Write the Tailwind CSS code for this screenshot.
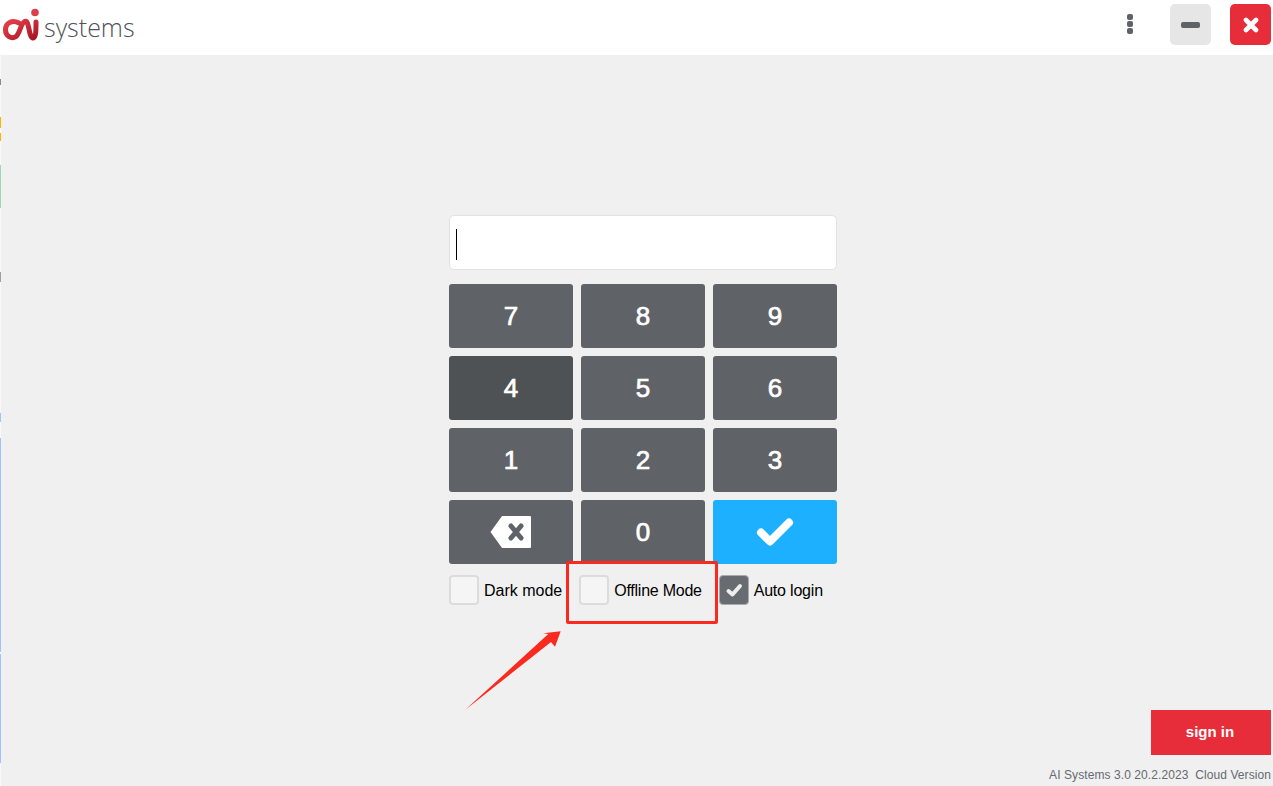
<!DOCTYPE html>
<html lang="en">

<head>
    <meta charset="UTF-8">
    <meta name="viewport" content="width=device-width, initial-scale=1.0">
    <title>AI Systems - Login</title>
    <script src="https://cdn.jsdelivr.net/npm/@tailwindcss/browser@4"></script>
</head>

<body class="relative w-[1273px] h-[786px] overflow-hidden bg-[#f0f0f0] font-['Liberation_Sans',Arial,sans-serif]">
    <!-- header -->
    <header class="h-[55px] bg-white flex items-start">
        <div class="flex items-center h-full">
            <svg width="44" height="55" viewBox="0 0 44 55" class="shrink-0">
                <defs>
                    <linearGradient id="logoRed" x1="0" y1="0" x2="1" y2="1">
                        <stop offset="0" stop-color="#e8414a" />
                        <stop offset="1" stop-color="#a81525" />
                    </linearGradient>
                </defs>
                <path d="M19 23 C12 19.500 5.500 23 5.500 29.800 C5.500 36 11.500 39.500 16 36.500 C20 33.500 20.500 24 24.500 21.500 C27 20 28 24 29 29 C30 35 31.500 38.500 33.500 37.800 C35.800 37 36 31 36 22" fill="none" stroke="url(#logoRed)" stroke-width="5" stroke-linecap="round" />
                <circle cx="35" cy="12.500" r="3.800" fill="#d9404a" />
            </svg>
            <span class="font-['Open_Sans',sans-serif] font-light text-[25px] text-[#4f5257] leading-none -mt-[1px]">systems</span>
        </div>
        <div class="ml-auto flex items-start pt-[4px]">
            <div class="flex flex-col gap-[1px] mt-[10px] mr-[37px]">
                <span class="w-[6px] h-[6px] rounded-[2px] bg-[#5f6266]"></span>
                <span class="w-[6px] h-[6px] rounded-[2px] bg-[#5f6266]"></span>
                <span class="w-[6px] h-[6px] rounded-[2px] bg-[#5f6266]"></span>
            </div>
            <button class="w-[41px] h-[41px] rounded-[5px] bg-[#e6e6e6] flex items-center justify-center mr-[19px]">
                <span class="w-[19px] h-[6px] rounded-[2px] bg-[#5f6266]"></span>
            </button>
            <button class="w-[41px] h-[41px] rounded-[5px] bg-[#e62d39] flex items-center justify-center mr-[2px]">
                <svg width="16" height="16" viewBox="0 0 16 16">
                    <path d="M3 3 L13 13 M13 3 L3 13" stroke="#fff" stroke-width="4.600" stroke-linecap="round" />
                </svg>
            </button>
        </div>
    </header>

    <!-- main -->
    <main class="h-[731px] flex flex-col pt-[160px]">
        <div class="w-[388px] ml-[449px]">
            <div class="h-[55px] bg-white border border-[#e2e2e2] rounded-[5px] flex items-center pl-[6px]">
                <span class="w-[1px] h-[31px] mt-[4px] bg-black"></span>
            </div>

            <div class="grid grid-cols-3 gap-[8px] mt-[14px]">
                <button class="h-[64px] rounded-[3px] bg-[#5f6266] text-white text-[26px] [-webkit-text-stroke:0.7px_#fff]">7</button>
                <button class="h-[64px] rounded-[3px] bg-[#5f6266] text-white text-[26px] [-webkit-text-stroke:0.7px_#fff]">8</button>
                <button class="h-[64px] rounded-[3px] bg-[#5f6266] text-white text-[26px] [-webkit-text-stroke:0.7px_#fff]">9</button>
                <button class="h-[64px] rounded-[3px] bg-[#4f5254] text-white text-[26px] [-webkit-text-stroke:0.7px_#fff]">4</button>
                <button class="h-[64px] rounded-[3px] bg-[#5f6266] text-white text-[26px] [-webkit-text-stroke:0.7px_#fff]">5</button>
                <button class="h-[64px] rounded-[3px] bg-[#5f6266] text-white text-[26px] [-webkit-text-stroke:0.7px_#fff]">6</button>
                <button class="h-[64px] rounded-[3px] bg-[#5f6266] text-white text-[26px] [-webkit-text-stroke:0.7px_#fff]">1</button>
                <button class="h-[64px] rounded-[3px] bg-[#5f6266] text-white text-[26px] [-webkit-text-stroke:0.7px_#fff]">2</button>
                <button class="h-[64px] rounded-[3px] bg-[#5f6266] text-white text-[26px] [-webkit-text-stroke:0.7px_#fff]">3</button>
                <button class="h-[64px] rounded-[3px] bg-[#5f6266] flex items-center justify-center">
                    <svg width="42" height="32" viewBox="0 0 42 32">
                        <path d="M12 0 H40 Q41 0 41 1 V31 Q41 32 40 32 H12 L0.500 16 Z" fill="#fff" />
                        <path d="M21 10 L31 22 M31 10 L21 22" stroke="#5f6266" stroke-width="5" stroke-linecap="round" />
                    </svg>
                </button>
                <button class="h-[64px] rounded-[3px] bg-[#5f6266] text-white text-[26px] [-webkit-text-stroke:0.7px_#fff]">0</button>
                <button class="h-[64px] rounded-[3px] bg-[#1cb0ff] flex items-center justify-center">
                    <svg width="38" height="30" viewBox="0 0 38 30">
                        <path d="M5 15.500 L14 24.500 L33 5.500" fill="none" stroke="#fff" stroke-width="8" stroke-linecap="round" stroke-linejoin="round" />
                    </svg>
                </button>
            </div>

            <div class="flex items-center mt-[11px] text-[16px] text-black">
                <span class="w-[30px] h-[30px] rounded-[4px] bg-[#f5f5f5] border-2 border-[#dcdcdc]"></span>
                <span class="ml-[5px] pt-[2px]">Dark mode</span>
                <span class="w-[30px] h-[30px] rounded-[4px] bg-[#f5f5f5] border-2 border-[#dcdcdc] ml-[17px]"></span>
                <span class="ml-[5px] pt-[2px] tracking-[-0.25px]">Offline Mode</span>
                <span class="w-[30px] h-[30px] rounded-[4px] bg-[#686b70] border border-[#a9abae] ml-[17px] flex items-center justify-center">
                    <svg width="20" height="20" viewBox="0 0 20 20">
                        <path d="M4.500 11 L8.500 14.500 L16 6" fill="none" stroke="#eeeeee" stroke-width="4" stroke-linecap="round" stroke-linejoin="round" />
                    </svg>
                </span>
                <span class="ml-[5px] pt-[2px] tracking-[-0.2px]">Auto login</span>
            </div>
        </div>

        <button class="mt-auto self-end mr-[2px] w-[120px] h-[45px] bg-[#e62d39] text-white text-[15px] font-bold pr-[2px]">sign in</button>
        <div class="self-end mr-[2px] mt-[13px] mb-[3px] text-[12px] leading-[15px] tracking-[0.08px] text-[#666a70] whitespace-pre">AI Systems 3.0 20.2.2023  Cloud Version</div>
    </main>

    <!-- left edge of the window behind -->
    <div class="absolute left-0 top-[55px] w-[1px] h-[731px] flex flex-col bg-[#f8f8f8]">
        <span class="mt-[24px] h-[6px] bg-[#8a8a8a]"></span>
        <span class="mt-[32px] h-[11px] bg-[#ffb400]"></span>
        <span class="mt-[5px] h-[8px] bg-[#ffb400]"></span>
        <span class="mt-[24px] h-[43px] bg-[#9fd8b4]"></span>
        <span class="mt-[64px] h-[10px] bg-[#a0a0a0]"></span>
        <span class="mt-[131px] h-[9px] bg-[#9cc3ff]"></span>
        <span class="mt-[16px] h-[214px] bg-[#9cc3ff]"></span>
        <span class="mt-[2px] h-[109px] bg-[#9cc3ff]"></span>
    </div>

    <!-- annotation -->
    <div class="absolute left-[566px] top-[561px] w-[152px] h-[63px] border-[3px] border-[#fb2a1f] rounded-[2px]"></div>
    <svg class="absolute left-0 top-0 pointer-events-none" width="1273" height="786" viewBox="0 0 1273 786">
        <polygon points="465,710 548.300,634 543.300,633.300 560.700,631.300 555,646.700 551,642" fill="#fb2a1f" />
    </svg>
</body>

</html>
